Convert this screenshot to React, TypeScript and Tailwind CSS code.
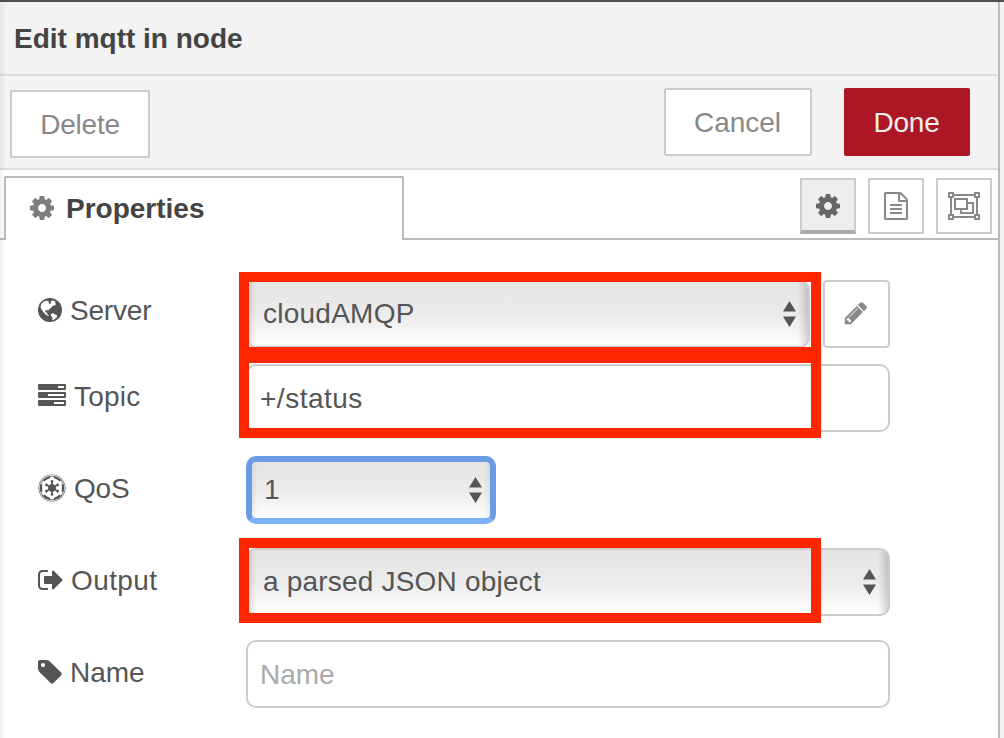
import { FaEmpire } from "react-icons/fa";
import type { ReactNode } from "react";

const paths = {
  cog: "M1152 896q0-106-75-181t-181-75-181 75-75 181 75 181 181 75 181-75 75-181zm512-109v222q0 12-8 23t-20 13l-185 28q-19 54-39 91 35 50 107 138 10 12 10 25t-9 23q-27 37-99 108t-94 71q-12 0-26-9l-138-108q-44 23-91 38-16 136-29 186-7 28-36 28h-222q-14 0-24.5-8.5t-11.5-21.5l-28-184q-49-16-90-37l-141 107q-10 9-25 9-14 0-25-11-126-114-165-168-7-10-7-23 0-12 8-23 15-21 51-66.5t54-70.5q-27-50-41-99l-183-27q-13-2-21-12.5t-8-23.5v-222q0-12 8-23t19-13l186-28q14-46 39-92-40-57-107-138-10-12-10-24 0-10 9-23 26-36 98.5-107.5t94.5-71.5q13 0 26 10l138 107q44-23 91-38 16-136 29-186 7-28 36-28h222q14 0 24.5 8.5t11.5 21.5l28 184q49 16 90 37l142-107q9-9 24-9 13 0 25 10 129 119 165 170 7 8 7 22 0 12-8 23-15 21-51 66.5t-54 70.5q26 50 41 98l183 28q13 2 21 12.5t8 23.5z",
  file: "M1596 380q28 28 48 76t20 88v1152q0 40-28 68t-68 28h-1344q-40 0-68-28t-28-68v-1600q0-40 28-68t68-28h896q40 0 88 20t76 48zm-444-244v376h376q-10-29-22-41l-313-313q-12-12-41-22zm384 1528v-1024h-416q-40 0-68-28t-28-68v-416h-768v1536h1280zm-1024-864q0-14 9-23t23-9h704q14 0 23 9t9 23v64q0 14-9 23t-23 9h-704q-14 0-23-9t-9-23v-64zm736 224q14 0 23 9t9 23v64q0 14-9 23t-23 9h-704q-14 0-23-9t-9-23v-64q0-14 9-23t23-9h704zm0 256q14 0 23 9t9 23v64q0 14-9 23t-23 9h-704q-14 0-23-9t-9-23v-64q0-14 9-23t23-9h704z",
  tag: "M576 448q0-53-37.5-90.5t-90.5-37.5-90.5 37.5-37.5 90.5 37.5 90.5 90.5 37.5 90.5-37.5 37.5-90.5zm1067 576q0 53-37 90l-491 492q-39 37-91 37-53 0-90-37l-715-716q-38-37-64.5-101t-26.5-117v-416q0-52 38-90t90-38h416q53 0 117 26.5t102 64.5l715 714q37 39 37 91z",
  pencil: "M491 1536l91-91-235-235-91 91v107h128v128h107zm523-928q0-22-22-22-10 0-17 7l-542 542q-7 7-7 17 0 22 22 22 10 0 17-7l542-542q7-7 7-17zm-54-192l416 416-832 832h-416v-416zm683 96q0 53-37 90l-166 166-416-416 166-165q36-38 90-38 53 0 91 38l235 234q37 39 37 91z",
  signOut: "M704 1440q0 4 1 20t.5 26.5-3 23.5-10 19.5-20.5 6.5h-320q-119 0-203.5-84.5t-84.5-203.5v-704q0-119 84.5-203.5t203.5-84.5h320q13 0 22.5 9.5t9.5 22.5q0 4 1 20t.5 26.5-3 23.5-10 19.5-20.5 6.5h-320q-66 0-113 47t-47 113v704q0 66 47 113t113 47h312l11.5 1 11.5 3 8 5.5 7 9 2 13.5zm928-544q0 26-19 45l-544 544q-19 19-45 19t-45-19-19-45v-288h-448q-26 0-45-19t-19-45v-384q0-26 19-45t45-19h448v-288q0-26 19-45t45-19 45 19l544 544q19 19 19 45z",
};

function Glyph({ name, className }: { name: keyof typeof paths; className: string }) {
  return (
    <svg viewBox="0 0 1792 1792" fill="currentColor" className={`shrink-0 ${className}`}>
      <path d={paths[name]} />
    </svg>
  );
}

function Globe() {
  return (
    <svg viewBox="0 0 24 24" className="size-6 shrink-0">
      <circle cx="12" cy="12" r="12" fill="currentColor" />
      <g fill="#fff">
        <path d="M3.4 5.8 5.8 3.6 8.6 2.8l2.2.5L10.4 5l1.8.9 1-1.5-.6-1.3 2.6-.7 2.2 1.1-.3 1.6 1 .9-1.5 1.5-2 .5-1.8 2.2-1.9 1.1-.5 1.7-1.2-1-1.8.5-.1 2 1.8.1.3 1.8 1.5.9-.4.6-2.4-1-2.4-2.3L3.6 11.5 2.5 9z" />
        <path d="m12.9 15.9 2-.6 2.5 1.2 1.9 1.1-.5 1.6-1.5 1.2-1.8 1.5-1.2.4.2-2.6-1.5-2z" />
      </g>
    </svg>
  );
}

function Tasks() {
  return (
    <svg viewBox="0 0 28 22" className="h-[22px] w-7 shrink-0">
      <g fill="currentColor">
        <rect width="28" height="6" rx="1" />
        <rect y="8" width="28" height="6" rx="1" />
        <rect y="16" width="28" height="6" rx="1" />
      </g>
      <g fill="#fff">
        <rect x="20" y="2" width="6" height="2" />
        <rect x="10" y="10" width="16" height="2" />
        <rect x="16" y="18" width="10" height="2" />
      </g>
    </svg>
  );
}

function ObjectGroup() {
  return (
    <svg viewBox="0 0 32 28" fill="none" stroke="currentColor" strokeWidth="2" className="h-7 w-8 shrink-0">
      <path d="M6 3h20M6 25h20M3 6v16M29 6v16" />
      <path d="M1 1h4v4H1zM27 1h4v4h-4zM1 23h4v4H1zM27 23h4v4h-4z" />
      <path d="M7 7h12v10H7zM19 11h6v10H13v-4" />
    </svg>
  );
}

function Arrows({ className = "mr-3" }: { className?: string }) {
  return (
    <svg viewBox="0 0 13 26" fill="#555" className={`h-[26px] w-[13px] shrink-0 ${className}`}>
      <path d="M6.5 0 13 10.5H0zM6.5 26 13 15.5H0z" />
    </svg>
  );
}

const selectFace =
  "flex h-[68px] items-center justify-between rounded-[10px] border-2 border-[#ccc] pl-[15px] bg-[linear-gradient(90deg,rgba(0,0,0,.12),transparent_8px,transparent_calc(100%_-_10px),rgba(0,0,0,.16)),linear-gradient(#e5e5e5,#ebebeb_50%,#fff)]";

interface RowProps {
  icon: ReactNode;
  label: string;
  children: ReactNode;
  className?: string;
  labelClass?: string;
}

function Row({ icon, label, children, className = "", labelClass = "h-16" }: RowProps) {
  return (
    <div className={`flex h-[68px] ${className}`}>
      <div className={`flex w-[208px] shrink-0 items-center gap-2 ${labelClass}`}>
        {icon}
        <span className="pt-0.5">{label}</span>
      </div>
      {children}
    </div>
  );
}

export default function App() {
  return (
    <div className="relative flex h-[738px] w-[1004px] overflow-hidden border-t-2 border-[#4f4d4f] bg-[#f3f3f3] font-['Liberation_Sans',sans-serif] text-[28px] leading-8 text-[#555]">
      <div className="flex w-[1000px] flex-col border-r-2 border-[#bbb] bg-white">
        <header className="flex h-[74px] items-center border-b-2 border-[#ddd] bg-[#f3f3f3] pt-0.5 pl-[14px] font-bold text-[#444]">
          Edit mqtt in node
        </header>
        <div className="flex h-[94px] items-start border-b-2 border-[#ddd] bg-[#f3f3f3] pl-[10px] text-[#888]">
          <button className="mt-[14px] h-[68px] w-[140px] rounded-[2px] border-2 border-[#ccc] bg-white pt-0.5 tracking-[-0.2px]">Delete</button>
          <button className="mt-3 ml-auto h-[68px] w-[148px] rounded-[2px] border-2 border-[#ccc] bg-white pt-0.5 pr-px">Cancel</button>
          <button className="mt-3 mr-7 ml-8 h-[68px] w-[126px] rounded-[2px] bg-[#ad1625] pt-0.5 pr-px tracking-[-0.2px] text-[#eee]">Done</button>
        </div>
        <div className="flex h-[70px] shrink-0 items-end">
          <div className="h-[70px] w-[4px] border-b-2 border-[#bbb]" />
          <div className="flex h-[64px] w-[400px] items-center rounded-t-[2px] border-2 border-b-0 border-[#bbb] pl-[22px] font-bold text-[#444]">
            <Glyph name="cog" className="-mt-0.5 size-7 text-[#7d7d7d]" />
            <span className="ml-[10px]">Properties</span>
          </div>
          <div className="flex h-[70px] flex-1 justify-end gap-3 border-b-2 border-[#bbb] pt-2 pr-[6px] text-[#888]">
            <button className="flex size-14 items-center justify-center border-2 border-b-4 border-[#ccc] border-b-[#aaa] bg-[#eee] pt-0.5 pr-px text-[#666]">
              <Glyph name="cog" className="size-7" />
            </button>
            <button className="flex size-14 items-center justify-center border-2 border-[#ccc] pr-px">
              <Glyph name="file" className="size-7" />
            </button>
            <button className="flex size-14 items-center justify-center border-2 border-[#ccc] pr-px">
              <ObjectGroup />
            </button>
          </div>
        </div>
        <main className="flex flex-col pt-10 pr-[108px] pl-[38px]">
          <Row icon={<Globe />} label="Server" labelClass="h-[60px] tracking-[-0.2px]">
            <div className={`${selectFace} w-[564px] tracking-[0.25px]`}>
              <span>cloudAMQP</span>
              <Arrows />
            </div>
            <button className="ml-auto flex h-[68px] w-[67px] items-center justify-center rounded-[4px] border-2 border-[#ccc] pr-0.5 pb-0.5 text-[#888]">
              <Glyph name="pencil" className="size-[26px]" />
            </button>
          </Row>
          <Row icon={<div className="pb-0.5"><Tasks /></div>} label="Topic" className="mt-4" labelClass="h-[64px] tracking-[0.2px]">
            <div className="flex flex-1 items-center rounded-[10px] border-2 border-[#ccc] pt-0.5 pl-3 tracking-[0.5px]">+/status</div>
          </Row>
          <Row icon={<FaEmpire className="size-7 shrink-0" />} label="QoS" className="mt-6" labelClass="h-16 tracking-[-0.2px]">
            <div className="flex h-[68px] w-[250px] items-center justify-between rounded-[10px] border-[6px] border-[#6a9be4] border-b-[#7fb0fa] bg-[linear-gradient(90deg,rgba(0,0,0,.06),transparent_6px,transparent_calc(100%_-_6px),rgba(0,0,0,.06)),linear-gradient(#e5e5e5,#ebebeb_50%,#fff)] pl-3">
              <span>1</span>
              <Arrows className="mr-2" />
            </div>
          </Row>
          <Row icon={<Glyph name="signOut" className="-mr-0.5 -ml-px size-7" />} label="Output" className="mt-6" labelClass="h-16 tracking-[0.4px]">
            <div className={`${selectFace} flex-1 tracking-[0.2px]`}>
              <span>a parsed JSON object</span>
              <Arrows />
            </div>
          </Row>
          <Row icon={<Glyph name="tag" className="-mr-0.5 -ml-0.5 size-7" />} label="Name" className="mt-6">
            <div className="flex flex-1 items-center rounded-[10px] border-2 border-[#ccc] pt-0.5 pl-3 text-[#aaa]">Name</div>
          </Row>
        </main>
      </div>
      <div className="absolute top-0 left-0 h-full w-[6px] bg-gradient-to-r from-black/5 to-transparent" />
      <div className="absolute top-[270px] left-[239px] flex h-[166px] w-[582px] flex-col border-[10px] border-[#ff2600]">
        <div className="mt-[65px] h-4 bg-[#ff2600]" />
      </div>
      <div className="absolute top-[536px] left-[239px] h-[85px] w-[582px] border-[10px] border-[#ff2600]" />
    </div>
  );
}
